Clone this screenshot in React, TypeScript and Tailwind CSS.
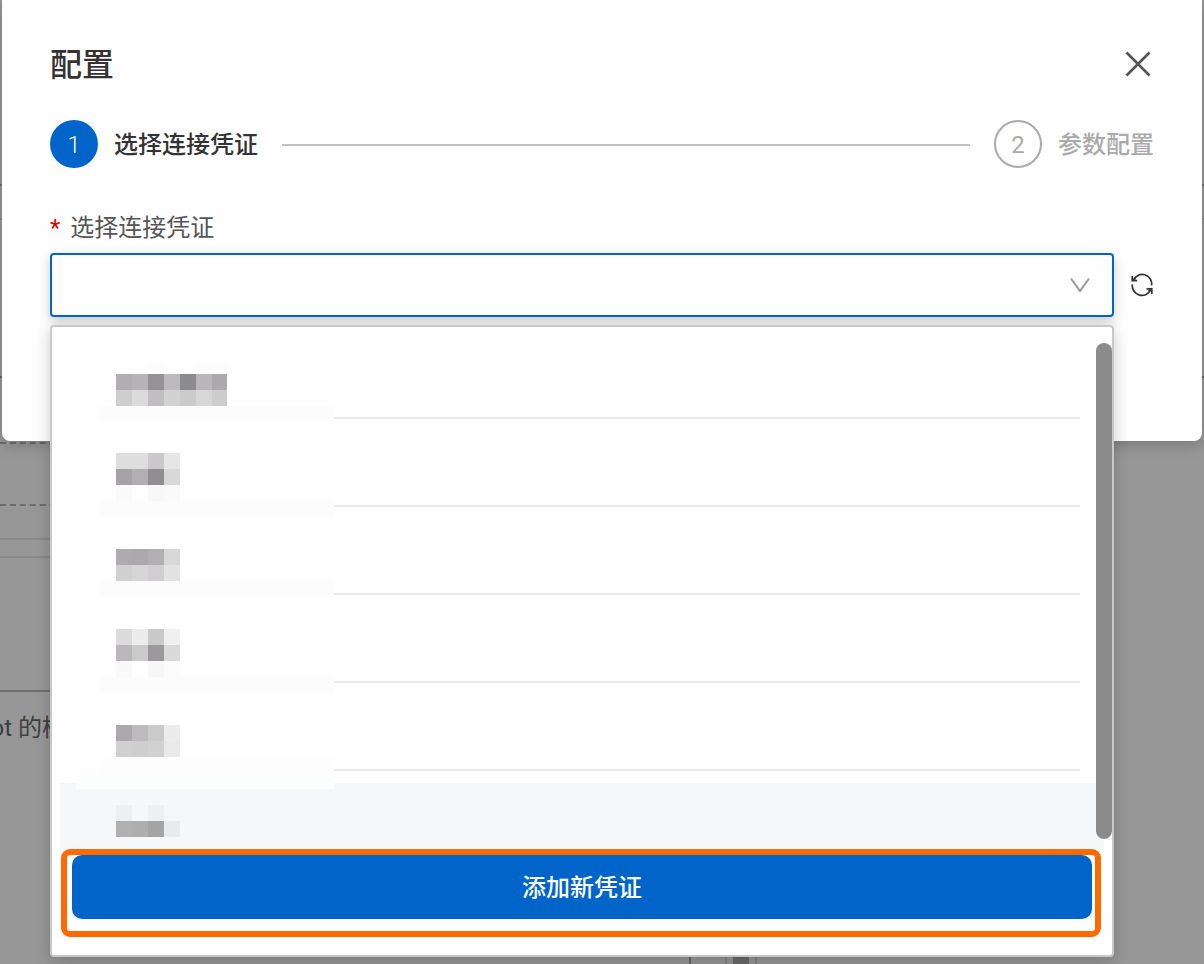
import { useState } from "react";

// [x, y, width, fill] of one 16px block, relative to the option's top left
type Block = [number, number, number, string];
type Credential = { id: string; blocks: Block[]; active?: boolean };

const credentials: Credential[] = [
  {
    id: "c1",
    blocks: [
      [48, 19, 16, "#fcfcfc"], [96, 19, 32, "#fcfcfc"],
      [16, 31, 16, "#b0aeb1"], [32, 31, 16, "#b5b3b6"], [48, 31, 16, "#949295"], [64, 31, 16, "#bcbabd"],
      [80, 31, 16, "#8c8b8d"], [96, 31, 16, "#b9b7ba"], [112, 31, 15, "#acaaad"],
      [16, 47, 16, "#cecece"], [32, 47, 16, "#dbdbdb"], [48, 47, 16, "#c0bec1"], [64, 47, 16, "#d2d2d2"],
      [80, 47, 16, "#cbcbcb"], [96, 47, 16, "#d7d7d7"], [112, 47, 15, "#cdcdcd"],
      [0, 63, 234, "#fcfcfc"],
    ],
  },
  {
    id: "c2",
    blocks: [
      [16, 22, 32, "#dedede"], [48, 22, 16, "#cac8cb"], [64, 22, 16, "#e6e6e6"],
      [16, 38, 16, "#a5a3a6"], [32, 38, 16, "#b1afb2"], [48, 38, 16, "#908e91"], [64, 38, 16, "#d8d8d8"],
      [16, 54, 16, "#fafafa"], [48, 54, 16, "#f8f8f8"], [64, 54, 16, "#fafafa"],
      [0, 70, 234, "#fcfcfc"],
    ],
  },
  {
    id: "c3",
    blocks: [
      [16, 30, 16, "#adabae"], [32, 30, 16, "#aba9ac"], [48, 30, 16, "#b1afb2"], [64, 30, 16, "#d7d7d7"],
      [16, 46, 16, "#d0d0d0"], [32, 46, 16, "#d6d6d6"], [48, 46, 16, "#d0ced1"], [64, 46, 16, "#e2e2e2"],
      [0, 62, 234, "#fcfcfc"],
    ],
  },
  {
    id: "c4",
    blocks: [
      [16, 22, 16, "#dbdbdb"], [32, 22, 16, "#ececec"], [48, 22, 16, "#c9c9c9"], [64, 22, 16, "#f0f0f0"],
      [16, 38, 16, "#bab8bb"], [32, 38, 16, "#cacaca"], [48, 38, 16, "#9b999c"], [64, 38, 16, "#dadada"],
      [16, 54, 16, "#f9f9f9"], [48, 54, 16, "#f7f7f7"], [64, 54, 16, "#fcfcfc"],
      [0, 70, 234, "#fcfcfc"],
    ],
  },
  {
    id: "c5",
    blocks: [
      [16, 30, 16, "#aba9ac"], [32, 30, 16, "#bdbbbe"], [48, 30, 16, "#cacaca"], [64, 30, 16, "#ececec"],
      [16, 46, 16, "#d0d0d0"], [32, 46, 16, "#cecece"], [48, 46, 16, "#d1d1d1"], [64, 46, 16, "#e9e9e9"],
      [0, 62, 234, "#fdfdfd"], [-24, 78, 258, "#fcfdfd"],
    ],
  },
  {
    id: "c6",
    active: true,
    blocks: [
      [16, 22, 16, "#eeeff0"], [32, 22, 16, "#f6f7f8"], [48, 22, 16, "#eeeff0"], [64, 22, 16, "#f6f7f9"],
      [16, 38, 16, "#b0b0b1"], [32, 38, 16, "#aeaeaf"], [48, 38, 16, "#a4a4a5"], [64, 38, 16, "#e9eaeb"],
    ],
  },
];

function CloseIcon() {
  return (
    <svg className="size-8" viewBox="0 0 32 32" fill="none" stroke="#555" strokeWidth="2.6" aria-hidden="true">
      <path d="M4.5 4.5l23 23M27.5 4.5l-23 23" />
    </svg>
  );
}

function RefreshIcon() {
  return (
    <svg className="size-6" viewBox="0 0 24 24" fill="none" stroke="#333" strokeWidth="1.7" aria-hidden="true">
      <path d="M3.2 7.4A9.6 9.6 0 0 1 21.6 12.4M20.8 16.4A9.6 9.6 0 0 1 2.4 11.4" />
      <path d="M2.2 3V7.6H7.2M21.8 21V15.8H16.6" />
      <path d="M2.4 7.4L5.6 5.2M21.6 16L18.4 18.4" />
    </svg>
  );
}

function Backdrop() {
  return (
    <div className="col-start-1 row-start-1 flex h-screen flex-col overflow-hidden text-[#3f3f3f]" aria-hidden="true">
      <div className="h-[184px]" />
      <div className="h-[34px] border-t-2 border-[#707070]" />
      <div className="h-[158px] border-t-2 border-[#838383]" />
      <div className="h-[66px] border-t-2 border-[#666]" />
      <div className="h-[62px] w-1/2 border-t-2 border-dashed border-[#6c6c6c]" />
      <div className="h-[34px] w-1/2 border-t-2 border-dashed border-[#6c6c6c]" />
      <div className="h-[18px] w-1/2 border-t-2 border-[#8a8a8a]" />
      <div className="h-[134px] w-1/2 border-t-2 border-[#8a8a8a]" />
      <div className="flex w-1/2 flex-1 flex-col border-t-2 border-[#6e6e6e]">
        <p className="-ml-16 pt-[18px] text-2xl leading-9 whitespace-nowrap">Copilot 的模型</p>
      </div>
      <div className="flex h-3">
        <div className="w-[691px] border-r-2 border-[#666]" />
        <div className="ml-[34px] flex border-x-2 border-[#828282] px-[6px]">
          <div className="w-4 bg-[#6a6a6a]" />
        </div>
      </div>
    </div>
  );
}

function Steps() {
  return (
    <ol className="flex items-center text-2xl">
      <li className="flex flex-1 items-center">
        <span className="flex size-12 items-center justify-center rounded-full bg-[#0064c8] pt-[2px] font-light text-white">1</span>
        <span className="ml-4 pt-[2px] font-medium text-[#333]">选择连接凭证</span>
        <span className="mx-6 mt-[2px] h-[2px] flex-1 bg-[#c1c1c1]" />
      </li>
      <li className="flex items-center gap-4 text-[#aaa]">
        <span className="flex size-12 items-center justify-center rounded-full border-2 border-[#aaa] pt-[2px]">2</span>
        <span className="pt-[2px] font-medium">参数配置</span>
      </li>
    </ol>
  );
}

function CredentialOption({ credential }: { credential: Credential }) {
  return (
    <li
      role="option"
      aria-selected={!!credential.active}
      aria-label={credential.id}
      className={`flex h-[76px] shrink-0 pr-6 pl-10 ${credential.active ? "bg-[#f6f7f9]" : ""}`}
    >
      <svg className="relative z-10 h-full w-[234px] shrink-0 overflow-visible" shapeRendering="crispEdges" aria-hidden="true">
        {credential.blocks.map(([x, y, w, fill]) => (
          <rect key={`${x}-${y}`} x={x} y={y} width={w} height={16} fill={fill} />
        ))}
      </svg>
      {!credential.active && <div className="flex-1 border-b-2 border-[#ededed]" />}
    </li>
  );
}

function CredentialMenu() {
  return (
    <div className="absolute inset-x-0 top-full z-10 mt-2 rounded border-2 border-[#c8c8c8] bg-[#fefefe] px-2 pt-4 pb-[18px] shadow-[0_4px_16px_rgba(0,0,0,0.2)]">
      <ul role="listbox" className="flex h-[506px] flex-col gap-3 overflow-hidden">
        {credentials.map((c) => (
          <CredentialOption key={c.id} credential={c} />
        ))}
      </ul>
      <div className="absolute top-4 right-0 z-10 h-[496px] w-4 rounded-full bg-[#8b8b8b]" />
      <div className="mr-[3px] ml-px rounded-[9px] border-6 border-[#ff6a00] pr-[3px] pb-3 pl-[5px]">
        <button type="button" className="h-16 w-full rounded-[10px] bg-[#0064c8] pt-[2px] text-2xl font-medium text-white">
          添加新凭证
        </button>
      </div>
    </div>
  );
}

export default function App() {
  const [value, setValue] = useState("");

  return (
    <main className="grid min-h-screen grid-cols-1 items-start overflow-hidden bg-[#979797] font-[Roboto,'Noto_Sans_CJK_SC',sans-serif]">
      <Backdrop />
      <section
        role="dialog"
        aria-labelledby="dialog-title"
        className="relative col-start-1 row-start-1 mx-[2px] rounded-b-lg bg-[#fefefe] px-12 pt-10 pb-[124px] shadow-[0_4px_16px_rgba(0,0,0,0.2)]"
      >
        <header className="mb-8 flex h-12 items-center justify-between">
          <h1 id="dialog-title" className="pt-[2px] text-[32px] leading-12 font-medium text-[#333]">配置</h1>
          <button type="button" aria-label="关闭"><CloseIcon /></button>
        </header>

        <Steps />

        <div className="mt-[42px] flex h-[43px] items-start gap-[10px] text-2xl leading-9 text-[#555]">
          <span className="text-[#e00000]">*</span>
          <label htmlFor="credential">选择连接凭证</label>
        </div>
        <div className="flex items-center gap-4">
          <div className="relative flex-1">
            <select
              id="credential"
              value={value}
              onChange={(e) => setValue(e.target.value)}
              className="block h-16 w-full appearance-none rounded border-2 border-[#0064c8] bg-[#fefefe] px-4 text-2xl shadow-[0_4px_12px_rgba(0,0,0,0.2)] outline-none"
            >
              <option value=""></option>
            </select>
            <svg className="pointer-events-none absolute top-5 right-[22px] size-6" viewBox="0 0 24 24" fill="none" stroke="#999" strokeWidth="2" aria-hidden="true">
              <path d="M3 5.5l9 12.5 9-12.5" />
            </svg>
            <CredentialMenu />
          </div>
          <button type="button" aria-label="刷新"><RefreshIcon /></button>
        </div>
      </section>
    </main>
  );
}
